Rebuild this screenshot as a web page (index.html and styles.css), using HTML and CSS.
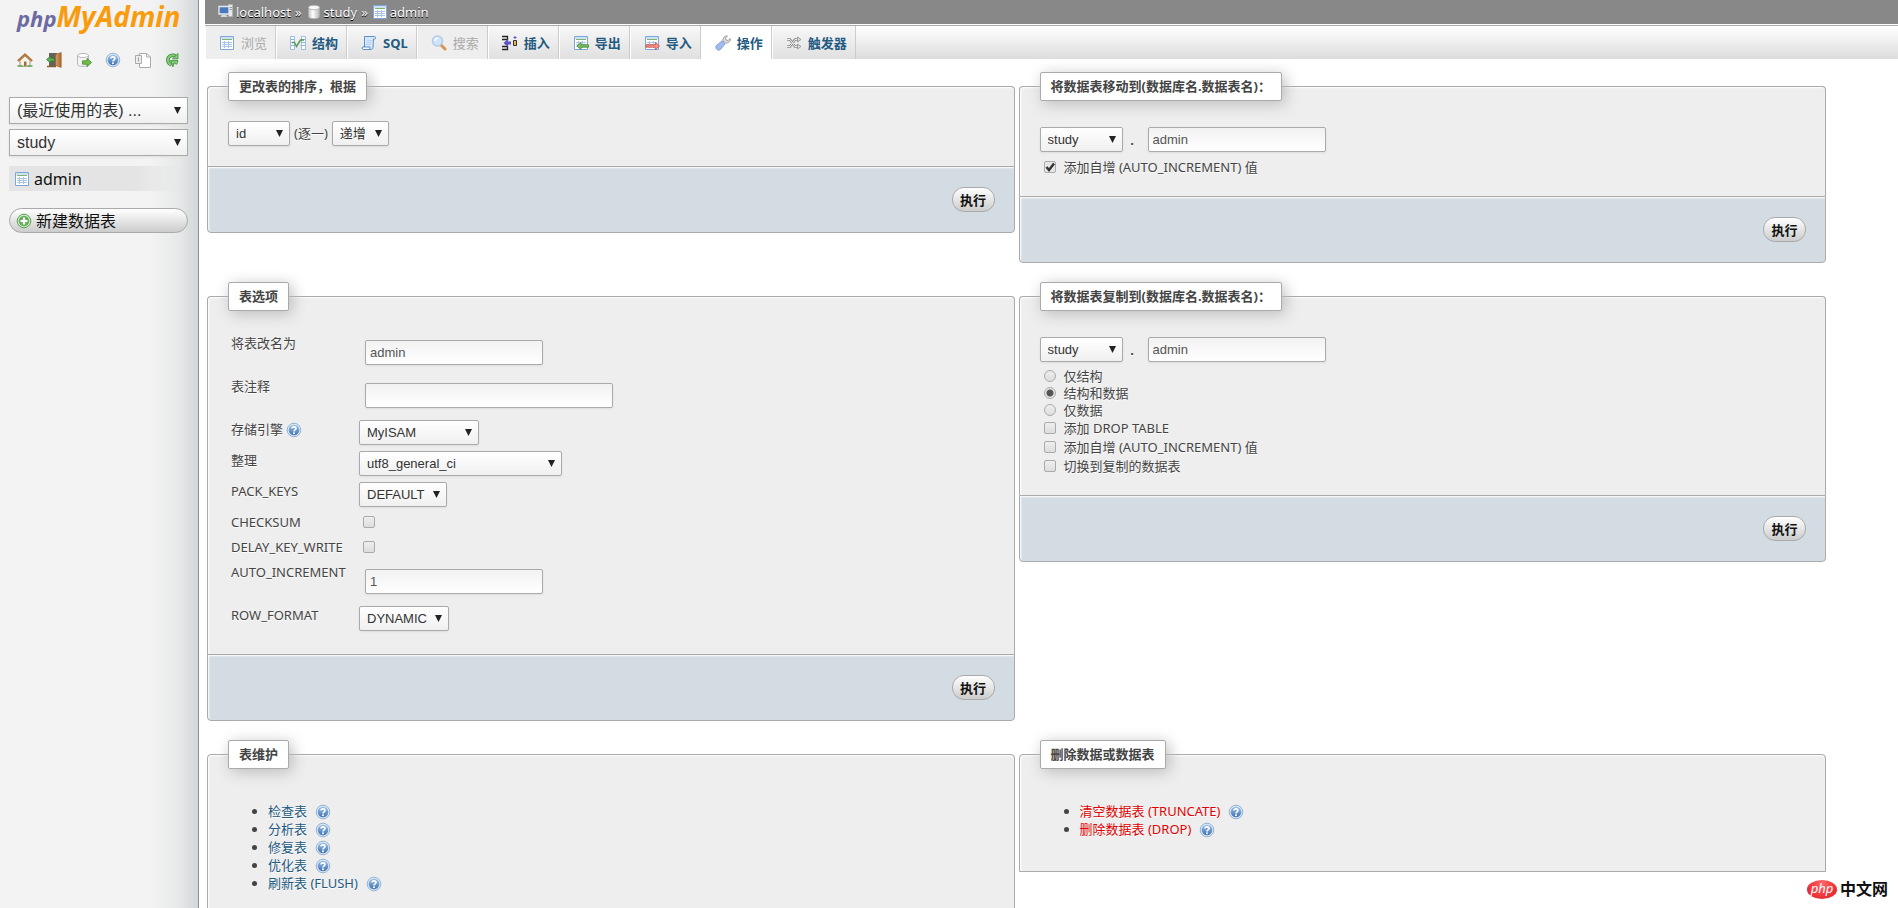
FILE: index.html
```html
<!DOCTYPE html>
<html lang="zh-CN">
<head>
<meta charset="utf-8">
<title>localhost / study / admin | phpMyAdmin</title>
<link rel="stylesheet" href="styles.css">
</head>
<body>
<svg class="sprite" width="0" height="0" aria-hidden="true">
  <defs>
    <linearGradient id="blue" x1="0" y1="0" x2="0" y2="1"><stop offset="0" stop-color="#9cc0e6"/><stop offset="1" stop-color="#3f74b3"/></linearGradient>
    <linearGradient id="grey" x1="0" y1="0" x2="1" y2="0"><stop offset="0" stop-color="#c4c4c4"/><stop offset=".4" stop-color="#fff"/><stop offset="1" stop-color="#b5b5b5"/></linearGradient>
    <linearGradient id="door" x1="0" y1="0" x2="1" y2="0"><stop offset="0" stop-color="#d9a066"/><stop offset="1" stop-color="#a8662c"/></linearGradient>
  </defs>
  <symbol id="i-table" viewBox="0 0 16 16">
    <path fill="#fff" stroke="#7da7d9" d="M1.500 1.500h13v13h-13z"/><path fill="#cfe0f3" d="M2 2h12v2H2z"/>
    <path stroke="#7fb56e" d="M3 4.500h10"/><path stroke="#a9c4e4" d="M3 7.500h2m1 0h3m1 0h3M3 9.500h2m1 0h3m1 0h3M3 11.500h2m1 0h3m1 0h3M5.500 6v7M9.500 6v7"/>
  </symbol>
  <symbol id="i-struct" viewBox="0 0 16 16">
    <path fill="#fff" stroke="#9cbce0" d="M.5 1.500h4v13h-4zM11.500 1.500h4v13h-4z"/><path stroke="#8fb3dc" d="M1 4.500h3M1 7.500h3M1 10.500h3M12 4.500h3M12 7.500h3M12 10.500h3"/>
    <path fill="none" stroke="#5d9a55" stroke-width="1.500" d="M2 7.500h2.500l2 4L10.500 5H14"/>
  </symbol>
  <symbol id="i-sql" viewBox="0 0 16 16">
    <path fill="#d7e7fa" stroke="#5b8ecb" d="M3.500 1.500h10c1.500 0 1.500 2.500 0 2.500h-1l-.5 8.500c0 1-1 2-2 2h-7c-1.500 0-2-2.500-.5-2.500h1z"/>
    <path fill="#fff" stroke="#5b8ecb" d="M2 12h7c-.5 1 0 2.500 1 2.500H2.500C1 14.500.8 12 2 12z"/><path stroke="#b9d2ef" d="M6 5.500h5M5.500 7.500h5M5 9.500h5"/>
  </symbol>
  <symbol id="i-search" viewBox="0 0 16 16">
    <path stroke="#d79552" stroke-width="3" stroke-linecap="round" d="M10 10l4 4"/><circle cx="6.500" cy="6" r="5" fill="#cfe4fa" stroke="#b4cbe4" stroke-width="1.500"/><path fill="none" stroke="#fff" stroke-width="1.500" d="M4 6a3 3 0 013-3"/>
  </symbol>
  <symbol id="i-insert" viewBox="0 0 16 16">
    <path fill="none" stroke="#222" stroke-width="1.300" d="M0 1.500h5.500v3H0M0 14.500h5.500v-3H0M5.500 4.500v1"/><path fill="#5a55c5" d="M1.500 8l4.500-4v2.500h3v3H6V12z"/>
    <path fill="#e8b93c" stroke="#333" d="M11.500 5.500h3v5h-3z"/><path stroke="#5a55c5" d="M11.500 2.500h3M13 1v3"/>
  </symbol>
  <symbol id="i-export" viewBox="0 0 16 16">
    <use href="#i-table"/><path fill="#7cc05f" stroke="#3f8a33" stroke-width=".8" d="M4 11l4-3.500v2.300h7.500v2.400H8v2.300z"/>
  </symbol>
  <symbol id="i-import" viewBox="0 0 16 16">
    <use href="#i-table"/><path fill="#f4948b" stroke="#d0483f" stroke-width=".8" d="M15.500 11l-4-3.500v2.300H2v2.400h9.500v2.300z"/>
  </symbol>
  <symbol id="i-wrench" viewBox="0 0 16 16">
    <path fill="#dedede" stroke="#8b8b8b" stroke-width=".8" d="M8 6c-.5-3 1.500-5.500 4.500-5L10.500 3l.5 2 2 .5L15.300 3.500c.5 3-2 5-4.800 4.500z"/>
    <path fill="#9fbcec" stroke="#7394d0" stroke-width=".8" d="M7 5.800l3.200 3.200-5 5.700c-2 1.500-5.500-1-4-4z"/>
  </symbol>
  <symbol id="i-trigger" viewBox="0 0 16 16">
    <path fill="none" stroke="#8c8c8c" stroke-width="2.600" d="M1 4.500h3l5 7h3M1 11.500h3l5-7h3"/><path fill="none" stroke="#eee" d="M1 4.500h3l5 7h3M1 11.500h3l5-7h3"/>
    <path fill="#ddd" stroke="#8c8c8c" stroke-width=".8" d="M11.500 2l3.500 2.500L11.500 7zM11.500 9l3.500 2.500-3.500 2.500z"/>
  </symbol>
  <symbol id="i-help" viewBox="0 0 16 16">
    <circle cx="8" cy="8" r="6.800" fill="#dce8f5" stroke="#7fa3cc" stroke-width=".8"/><circle cx="8" cy="8" r="5.300" fill="url(#blue)"/>
    <path fill="none" stroke="#fff" stroke-width="1.600" d="M6 6.600C6 4.300 10 4.300 10 6.500 10 8 8 7.800 8 9.500"/><circle cx="8" cy="11.300" r="1" fill="#fff"/>
  </symbol>
  <symbol id="i-home" viewBox="0 0 16 16">
    <path fill="#fbf3e6" stroke="#8a7a62" stroke-width=".8" d="M3 8.500L8 4l5 4.500v5.700H3z"/><path fill="none" stroke="#b5743c" stroke-width="2" d="M.8 9L8 2.300 15.200 9"/>
    <path fill="#9a7048" d="M7 9.500h2.500v4.700H7z"/><path stroke="#65a84c" stroke-width="1.500" d="M.5 14h5M10.500 14h5"/>
  </symbol>
  <symbol id="i-exit" viewBox="0 0 16 16">
    <path fill="#65615b" d="M3 1h8v13H3z"/><path fill="url(#door)" stroke="#8d5a2a" stroke-width=".6" d="M9.500 2.500L15.200.5v15l-5.700-2z"/><path stroke="#8d5a2a" stroke-width="1.500" d="M1 14.500h9"/>
    <path fill="#5cae55" stroke="#2e7b31" stroke-width=".7" d="M.5 7.500l4-3.500v2.200h4v2.800h-4V11z"/>
  </symbol>
  <symbol id="i-db" viewBox="0 0 16 16">
    <path fill="url(#grey)" stroke="#aaa" stroke-width=".8" d="M2.500 3.500v9c0 3 11 3 11 0v-9z"/><ellipse cx="8" cy="3.500" rx="5.500" ry="2.300" fill="#f7f7f7" stroke="#aaa" stroke-width=".8"/>
  </symbol>
  <symbol id="i-dbgo" viewBox="0 0 16 16">
    <path fill="#f4f4f4" stroke="#aaa" stroke-width=".8" d="M1.500 3.500v9c0 2.600 11 2.600 11 0v-9z"/><ellipse cx="7" cy="3.500" rx="5.500" ry="2" fill="#fff" stroke="#aaa" stroke-width=".8"/>
    <path fill="#72bd4c" stroke="#3d8a2a" stroke-width=".8" d="M15.500 10.500l-4.500-4.200v2.500H6.500v3.400H11v2.500z"/>
  </symbol>
  <symbol id="i-pages" viewBox="0 0 16 16">
    <path fill="#fff" stroke="#aaa" d="M4.500 1.500h7l4 3.500v10.500h-11z"/><path fill="none" stroke="#aaa" d="M11.500 1.500v3.500h4"/>
    <path fill="#eee" stroke="#aaa" d="M.5 3.500h6v8h-6z"/><path stroke="#999" d="M3.500 5.500v4"/>
  </symbol>
  <symbol id="i-reload" viewBox="0 0 16 16">
    <path fill="none" stroke="#398a39" stroke-width="3.600" d="M11.500 4.300A4.800 4.800 0 107.500 12.800"/><path fill="none" stroke="#85cc78" stroke-width="2" d="M11.500 4.300A4.800 4.800 0 107.500 12.800"/>
    <path fill="#85cc78" stroke="#398a39" stroke-width=".8" d="M8.500 6.800h5.500V1.500zM6.500 8.500h7.300c0 1.500-.5 2.800-1.300 3.800l-2.500-1.500-1 4z"/>
  </symbol>
  <symbol id="i-plus" viewBox="0 0 16 16">
    <circle cx="8" cy="8" r="6.800" fill="#d5ecd0" stroke="#59a052"/><circle cx="8" cy="8" r="5.300" fill="#67ad5c"/><path stroke="#fff" stroke-width="2.200" d="M8 4.500v7M4.500 8h7"/>
  </symbol>
  <symbol id="i-server" viewBox="0 0 16 16">
    <path fill="#e8e8e8" stroke="#b5b5b5" d="M10.500.5h4v12h-4z"/><path stroke="#999" d="M11 3.500h3M11 5.500h3"/>
    <path fill="#4b79be" stroke="#e5e9f0" stroke-width="1.300" d="M1 2.500h10v7.500H1z"/><path fill="#dadada" d="M4 10.700h4L9.500 13h-7z"/>
  </symbol>
</svg>

<aside class="sidebar">
  <a class="logo" href="#"><span class="logo-php">php</span>MyAdmin</a>
  <nav class="side-icons" aria-label="快捷链接">
    <a href="#" aria-label="主页"><svg class="icon"><use href="#i-home"/></svg></a>
    <a href="#" aria-label="退出"><svg class="icon"><use href="#i-exit"/></svg></a>
    <a href="#" aria-label="查询窗口"><svg class="icon"><use href="#i-dbgo"/></svg></a>
    <a href="#" aria-label="phpMyAdmin 文档"><svg class="icon"><use href="#i-help"/></svg></a>
    <a href="#" aria-label="文档"><svg class="icon"><use href="#i-pages"/></svg></a>
    <a href="#" aria-label="刷新导航"><svg class="icon"><use href="#i-reload"/></svg></a>
  </nav>
  <div class="side-selects">
    <select class="side-select" aria-label="最近使用的表"><option>(最近使用的表) ...</option></select>
    <select class="side-select" aria-label="数据库"><option>study</option></select>
  </div>
  <a class="side-table" href="#"><svg class="icon"><use href="#i-table"/></svg>admin</a>
  <button class="side-new" type="button"><svg class="icon"><use href="#i-plus"/></svg>新建数据表</button>
</aside>

<main class="main">
  <nav class="crumbs" aria-label="位置">
    <a href="#"><svg class="icon"><use href="#i-server"/></svg>localhost</a><span>»</span>
    <a href="#"><svg class="icon"><use href="#i-db"/></svg>study</a><span>»</span>
    <a href="#"><svg class="icon"><use href="#i-table"/></svg>admin</a>
  </nav>
  <nav class="tabs" aria-label="标签">
    <a class="tab tab-off" href="#"><svg class="icon"><use href="#i-table"/></svg>浏览</a>
    <a class="tab" href="#"><svg class="icon"><use href="#i-struct"/></svg>结构</a>
    <a class="tab" href="#"><svg class="icon"><use href="#i-sql"/></svg>SQL</a>
    <a class="tab tab-off" href="#"><svg class="icon"><use href="#i-search"/></svg>搜索</a>
    <a class="tab" href="#"><svg class="icon"><use href="#i-insert"/></svg>插入</a>
    <a class="tab" href="#"><svg class="icon"><use href="#i-export"/></svg>导出</a>
    <a class="tab" href="#"><svg class="icon"><use href="#i-import"/></svg>导入</a>
    <a class="tab tab-active" href="#"><svg class="icon"><use href="#i-wrench"/></svg>操作</a>
    <a class="tab" href="#"><svg class="icon"><use href="#i-trigger"/></svg>触发器</a>
  </nav>

  <div class="panels">
    <form class="panel">
      <fieldset class="box">
        <legend>更改表的排序，根据</legend>
        <div class="order-row">
          <select class="w-id" aria-label="字段"><option>id</option></select>
          <span>(逐一)</span>
          <select class="w-dir" aria-label="方向"><option>递增</option></select>
        </div>
      </fieldset>
      <div class="box-foot"><button class="go" type="button">执行</button></div>
    </form>

    <form class="panel">
      <fieldset class="box">
        <legend>将数据表移动到(数据库名.数据表名)：</legend>
        <div class="target-row">
          <select class="w-db" aria-label="数据库名"><option>study</option></select><b class="dot">.</b>
          <input class="text" type="text" value="admin" aria-label="数据表名">
        </div>
        <div class="choices">
          <label class="choice"><input type="checkbox" checked>添加自增 (AUTO_INCREMENT) 值</label>
        </div>
      </fieldset>
      <div class="box-foot"><button class="go" type="button">执行</button></div>
    </form>

    <form class="panel">
      <fieldset class="box">
        <legend>表选项</legend>
        <table class="options">
          <tr><th><label for="o-name">将表改名为</label></th><td><input class="text" id="o-name" type="text" value="admin"></td></tr>
          <tr><th><label for="o-comment">表注释</label></th><td><input class="text text-long" id="o-comment" type="text"></td></tr>
          <tr><th><label for="o-engine">存储引擎</label> <a href="#" aria-label="文档"><svg class="icon"><use href="#i-help"/></svg></a></th><td><select class="w-engine" id="o-engine"><option>MyISAM</option></select></td></tr>
          <tr><th><label for="o-coll">整理</label></th><td><select class="w-coll" id="o-coll"><option>utf8_general_ci</option></select></td></tr>
          <tr><th><label for="o-pack">PACK_KEYS</label></th><td><select class="w-pack" id="o-pack"><option>DEFAULT</option></select></td></tr>
          <tr><th><label for="o-sum">CHECKSUM</label></th><td><input id="o-sum" type="checkbox"></td></tr>
          <tr><th><label for="o-delay">DELAY_KEY_WRITE</label></th><td><input id="o-delay" type="checkbox"></td></tr>
          <tr><th><label for="o-auto">AUTO_INCREMENT</label></th><td><input class="text" id="o-auto" type="text" value="1"></td></tr>
          <tr><th><label for="o-row">ROW_FORMAT</label></th><td><select class="w-row" id="o-row"><option>DYNAMIC</option></select></td></tr>
        </table>
      </fieldset>
      <div class="box-foot"><button class="go" type="button">执行</button></div>
    </form>

    <form class="panel">
      <fieldset class="box">
        <legend>将数据表复制到(数据库名.数据表名)：</legend>
        <div class="target-row">
          <select class="w-db" aria-label="数据库名"><option>study</option></select><b class="dot">.</b>
          <input class="text" type="text" value="admin" aria-label="数据表名">
        </div>
        <div class="choices">
          <label class="choice choice-radio"><input type="radio" name="what">仅结构</label>
          <label class="choice choice-radio"><input type="radio" name="what" checked>结构和数据</label>
          <label class="choice choice-radio"><input type="radio" name="what">仅数据</label>
          <label class="choice"><input type="checkbox">添加 DROP TABLE</label>
          <label class="choice"><input type="checkbox">添加自增 (AUTO_INCREMENT) 值</label>
          <label class="choice"><input type="checkbox">切换到复制的数据表</label>
        </div>
      </fieldset>
      <div class="box-foot"><button class="go" type="button">执行</button></div>
    </form>

    <section class="panel">
      <fieldset class="box box-closed">
        <legend>表维护</legend>
        <ul class="links">
          <li><a href="#">检查表</a><a href="#" aria-label="文档"><svg class="icon"><use href="#i-help"/></svg></a></li>
          <li><a href="#">分析表</a><a href="#" aria-label="文档"><svg class="icon"><use href="#i-help"/></svg></a></li>
          <li><a href="#">修复表</a><a href="#" aria-label="文档"><svg class="icon"><use href="#i-help"/></svg></a></li>
          <li><a href="#">优化表</a><a href="#" aria-label="文档"><svg class="icon"><use href="#i-help"/></svg></a></li>
          <li><a href="#">刷新表 (FLUSH)</a><a href="#" aria-label="文档"><svg class="icon"><use href="#i-help"/></svg></a></li>
        </ul>
      </fieldset>
    </section>

    <section class="panel">
      <fieldset class="box box-closed">
        <legend>删除数据或数据表</legend>
        <ul class="links links-danger">
          <li><a href="#">清空数据表 (TRUNCATE)</a><a href="#" aria-label="文档"><svg class="icon"><use href="#i-help"/></svg></a></li>
          <li><a href="#">删除数据表 (DROP)</a><a href="#" aria-label="文档"><svg class="icon"><use href="#i-help"/></svg></a></li>
        </ul>
      </fieldset>
    </section>
  </div>
</main>

<div class="watermark"><span class="watermark-php">php</span>中文网</div>
</body>
</html>
```
FILE: styles.css
```css
* { box-sizing: border-box; }

body {
  margin: 0;
  height: 100vh;
  display: flex;
  overflow: hidden;
  background: #fff;
  color: #444;
  font: 13px/18px "Noto Sans", "Noto Sans CJK SC", sans-serif;
}

a { color: #235a81; text-decoration: none; }
.sprite { position: absolute; }
.icon { width: 16px; height: 16px; flex: none; display: block; }

/* Sidebar */
.sidebar {
  flex: none;
  width: 199px;
  padding: 0 10px 0 9px;
  border-right: 1px solid #8c9093;
  background: linear-gradient(to right, #f3f3f3 150px, #e6e8e8 180px, #d2d6d8 198px);
}
.logo {
  display: block;
  padding-left: 8px;
  height: 36px;
  color: #f89c0e;
  font-family: "Open Sans", sans-serif;
  font-size: 28px;
  line-height: 32px;
  font-weight: 700;
  font-style: italic;
  white-space: nowrap;
}
.logo-php { color: #6c6aa0; font-size: 22px; }
.side-icons {
  display: flex;
  justify-content: space-between;
  padding: 16px 8px 0;
  height: 61px;
}
.side-selects { display: grid; gap: 5px; }
.sidebar .side-select { width: 100%; height: 27px; border-radius: 0; font-size: 16px; }
.side-table {
  display: flex;
  align-items: center;
  gap: 4px;
  height: 25px;
  margin: 10px 0 17px;
  padding-left: 5px;
  background: linear-gradient(to right, #e4e4e4 70%, transparent);
  color: #111;
  font-size: 16px;
}
.side-new {
  display: flex;
  align-items: center;
  gap: 4px;
  width: 100%;
  height: 25px;
  padding: 0 6px;
  border: 1px solid #aaa;
  border-radius: 13px;
  background: linear-gradient(#fff, #ccc);
  color: #111;
  font: inherit;
  font-size: 16px;
}

/* Header */
.main { flex: 1; min-width: 0; padding-left: 6px; overflow: hidden; }
.crumbs {
  display: flex;
  align-items: center;
  gap: 4px;
  height: 24px;
  padding-left: 13px;
  background: #888;
  color: #fff;
  text-shadow: 0 1px 0 #000;
}
.crumbs a { display: flex; align-items: center; gap: 2px; color: #fff; }
.tabs {
  display: flex;
  height: 34px;
  margin-top: 1px;
  border-top: 1px solid #aaa;
  background: linear-gradient(#fff, #dcdcdc);
}
.tab {
  display: flex;
  align-items: center;
  gap: 6px;
  padding: 0 8px 0 13px;
  border-left: 1px solid #fff;
  border-right: 1px solid #ccc;
  background: linear-gradient(#f8f8f8, #e0e0e0);
  font-weight: 700;
  white-space: nowrap;
}
.tab-off { background: #eee; color: #aaa; font-weight: 400; }
.tab-active { background: #fff; }

/* Panels */
.panels {
  display: grid;
  grid-template-columns: 1fr 1fr;
  align-items: start;
  gap: 19px 4px;
  padding: 13px 4.25% 0 2px;
}
.panel { min-width: 0; }
.box {
  margin: 0;
  min-width: 0;
  padding: 20px;
  border: 1px solid #aaa;
  border-bottom: 0;
  border-radius: 4px 4px 0 0;
  background: #eee;
  box-shadow: inset 1px 1px 2px #fff;
  text-shadow: 0 1px 0 #fff;
}
.box-closed { border-bottom: 1px solid #aaa; }
legend {
  padding: 5px 10px;
  border: 1px solid #aaa;
  border-radius: 2px;
  background: #fff;
  box-shadow: 3px 3px 15px #bbb;
  font-weight: 700;
  line-height: 17px;
}
.box-foot {
  display: flex;
  justify-content: flex-end;
  padding: 20px 19px;
  border: 1px solid #aaa;
  border-radius: 0 0 4px 4px;
  background: #d3dce3;
  box-shadow: inset 1px 1px 2px #fff;
}
.go {
  width: 43px;
  height: 25px;
  padding: 0;
  border: 1px solid #aaa;
  border-radius: 12px;
  background: linear-gradient(#fff, #ccc);
  color: #111;
  font: inherit;
  font-weight: 700;
}

/* Controls */
select, .text {
  display: block;
  height: 25px;
  border: 1px solid #aaa;
  border-radius: 2px;
  box-shadow: 0 1px 2px #ddd;
  font: 13px "Liberation Sans", "Noto Sans CJK SC", sans-serif;
}
select {
  appearance: none;
  padding: 0 18px 0 7px;
  background:
    url("data:image/svg+xml,%3Csvg xmlns='http://www.w3.org/2000/svg' width='7' height='7'%3E%3Cpath fill='%23222' d='M0 0h7L3.500 7z'/%3E%3C/svg%3E") no-repeat right 6px center,
    linear-gradient(#fff, #f0f0f0);
  color: #333;
}
.text {
  width: 178px;
  margin: 6px;
  padding: 0 4px;
  background: linear-gradient(#f2f2f2, #fff);
  color: #555;
}
.text-long { width: 248px; }
.w-id { width: 62px; }
.w-dir { width: 57px; }
.w-db { width: 83px; }
.w-engine { width: 120px; }
.w-coll { width: 203px; }
.w-pack { width: 88px; }
.w-row { width: 90px; }

input[type="checkbox"], input[type="radio"] {
  appearance: none;
  flex: none;
  display: block;
  width: 12px;
  height: 12px;
  margin: 3px 4px;
  border: 1px solid #aaa;
  border-radius: 2px;
  background: linear-gradient(#eee, #ddd);
}
input[type="radio"] { border-radius: 50%; }
input[type="radio"]:checked { background: radial-gradient(circle, #555 3px, #e6e6e6 4px); }
input[type="checkbox"]:checked {
  background: url("data:image/svg+xml,%3Csvg xmlns='http://www.w3.org/2000/svg' width='10' height='10'%3E%3Cpath fill='none' stroke='%23333' stroke-width='2.4' d='M1.500 5l2.500 3L9 1.500'/%3E%3C/svg%3E") no-repeat center, #e6e6e6;
}

.order-row { display: flex; align-items: baseline; gap: 4px; }
.target-row { display: flex; align-items: center; }
.dot { width: 19px; text-align: center; }
.choices { display: grid; gap: 1px; }
.choice { display: flex; align-items: center; gap: 4px; height: 18px; }
.choice-radio { height: 16px; }

.options { border-collapse: collapse; }
.options th, .options td { padding: 3px; vertical-align: top; text-align: left; }
.options th { min-width: 128px; font-weight: 400; }
.options td input[type="checkbox"] { margin-bottom: 4px; }
.options th a { display: inline-block; vertical-align: top; margin-top: 2px; height: 16px; }

.links { margin: 13px 0; padding-left: 40px; }
.links li { height: 18px; }
.links a { display: inline-block; vertical-align: top; }
.links .icon { margin: 2px 8px 0; }
.links-danger a { color: #e00000; }

.watermark {
  position: absolute;
  right: 10px;
  bottom: 8px;
  display: flex;
  align-items: center;
  gap: 3px;
  color: #111;
  font-size: 16px;
  line-height: 22px;
  font-weight: 700;
}
.watermark-php {
  width: 30px;
  height: 19px;
  border-radius: 50%;
  background: radial-gradient(ellipse at 50% 20%, #f66, #e0161c);
  color: #fff;
  font-size: 13px;
  line-height: 16px;
  font-style: italic;
  font-weight: 400;
  text-align: center;
}
```
